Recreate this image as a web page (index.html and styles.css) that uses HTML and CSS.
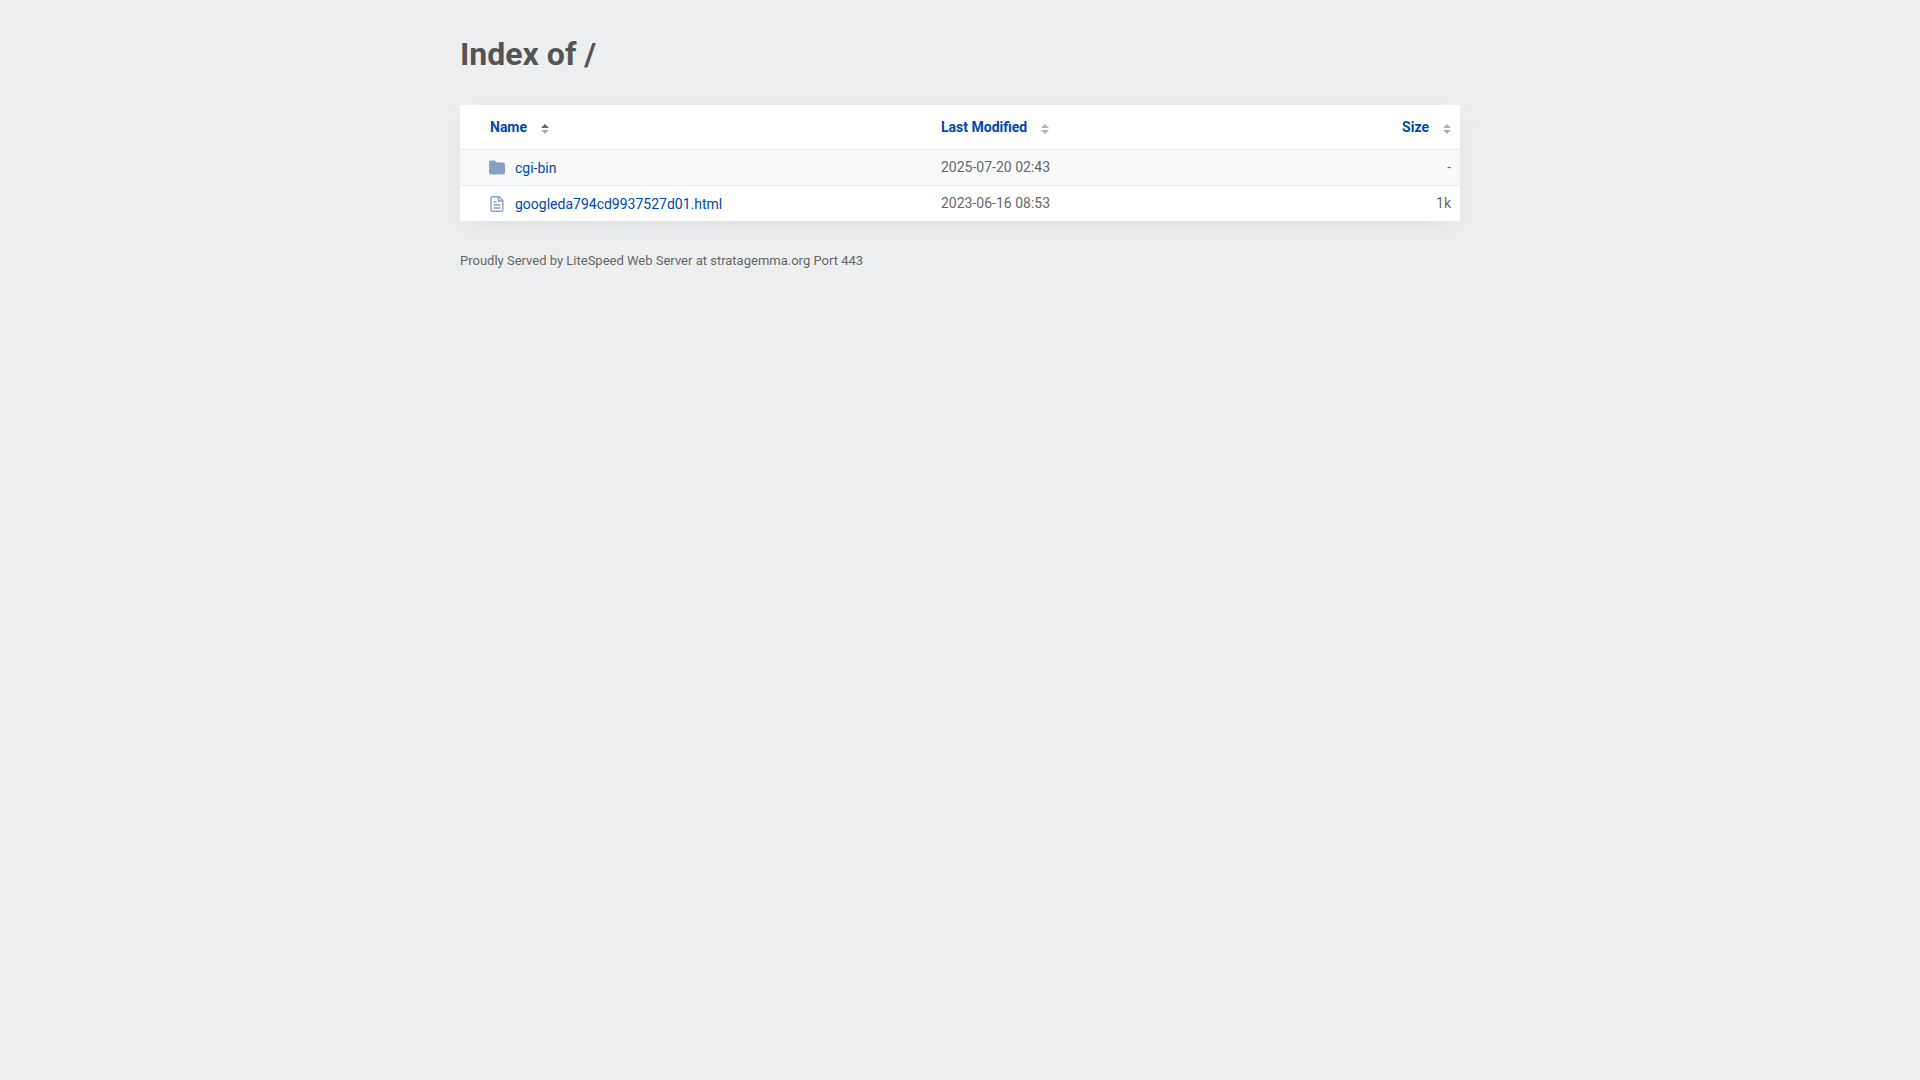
FILE: index.html
```html
<!DOCTYPE html>
<html lang="en">
<head>
  <meta charset="UTF-8">
  <meta name="viewport" content="width=device-width, initial-scale=1">
  <title>Index of /</title>
  <link rel="stylesheet" href="styles.css">
</head>
<body>

<div class="content">
  <h1>Index of /</h1>

  <table class="listing">
    <thead>
      <tr>
        <th class="col-name">
          <a href="#name">Name<svg class="sort" viewBox="0 0 8 10"><path class="active" d="M4 0l4 4H0z"/><path d="M0 6h8l-4 4z"/></svg></a>
        </th>
        <th class="col-date">
          <a href="#modified">Last Modified<svg class="sort" viewBox="0 0 8 10"><path d="M4 0l4 4H0z"/><path d="M0 6h8l-4 4z"/></svg></a>
        </th>
        <th class="col-size">
          <a href="#size">Size<svg class="sort" viewBox="0 0 8 10"><path d="M4 0l4 4H0z"/><path d="M0 6h8l-4 4z"/></svg></a>
        </th>
      </tr>
    </thead>
    <tbody>
      <tr>
        <td class="col-name">
          <a href="cgi-bin/">
            <svg class="icon" viewBox="0 0 16 16"><path d="M2 .5h3.700q.5 0 .8.400L8 2.500h6q2 0 2 2v8q0 2-2 2H2q-2 0-2-2v-10q0-2 2-2z"/></svg>
            cgi-bin
          </a>
        </td>
        <td class="col-date">2025-07-20 02:43</td>
        <td class="col-size">-</td>
      </tr>
      <tr>
        <td class="col-name">
          <a href="googleda794cd9937527d01.html">
            <svg class="icon line" viewBox="0 0 16 16"><path d="M3.500.7H10L13.900 4.600V13.800q0 1.500-1.500 1.500H3.500Q2 15.300 2 13.800V2.200Q2 .7 3.500.7zM9.500.8V5h4.300M4.500 6h3M4.500 9h7M4.500 12h7"/></svg>
            googleda794cd9937527d01.html
          </a>
        </td>
        <td class="col-date">2023-06-16 08:53</td>
        <td class="col-size">1k</td>
      </tr>
    </tbody>
  </table>

  <footer>Proudly Served by LiteSpeed Web Server at stratagemma.org Port 443</footer>
</div>

</body>
</html>
```
FILE: styles.css
```css
body {
  margin: 0;
  padding: 32px 20px;
  background-color: #edeef0;
  color: #666;
  font-family: Roboto, sans-serif;
  font-size: 14px;
  line-height: 20px;
}

.content {
  max-width: 1000px;
  margin: 0 auto;
}

h1 {
  margin: 0 0 28px;
  color: #555;
  font-size: 32px;
  line-height: 45px;
  font-weight: 700;
}

a {
  color: #0047ab;
  text-decoration: none;
}

a:hover {
  text-decoration: underline;
}

.listing {
  width: 100%;
  table-layout: fixed;
  border-spacing: 0;
  background-color: #fff;
  box-shadow: 0 7px 25px -7px rgba(0, 50, 50, 0.1);
}

.listing th,
.listing td {
  padding: 7px 9px 8px;
  text-align: left;
}

.listing th {
  padding: 12px 9px;
  font-weight: 700;
}

.listing td {
  border-top: 1px solid #e9ebee;
}

.listing tbody tr:nth-child(odd) {
  background-color: #f9fafc;
}

.listing .col-name {
  width: 47%;
  padding-left: 29px;
  box-sizing: border-box;
}

.listing td.col-name {
  padding-top: 8px;
  padding-bottom: 7px;
}

.listing th.col-name {
  padding-left: 30px;
}

.listing .col-date {
  padding-left: 11px;
}

.listing .col-size {
  width: 20%;
  text-align: right;
}

.sort {
  width: 8px;
  height: 10px;
  margin-left: 14px;
  vertical-align: -2px;
  fill: #b0b0b0;
}

.sort .active {
  fill: #666;
}

td.col-name a {
  display: flex;
  align-items: center;
  gap: 10px;
}

.icon {
  width: 16px;
  height: 16px;
  fill: #879fc8;
}

.icon.line {
  fill: none;
  stroke: #87a1c8;
  stroke-width: 1.4;
}

footer {
  margin-top: 30px;
  font-size: 13px;
}
```
